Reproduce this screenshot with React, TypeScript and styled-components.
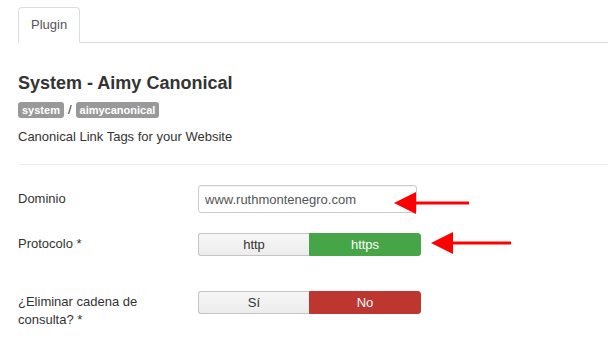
import React, { FC } from "react";
import styled, { createGlobalStyle } from "styled-components";

const GlobalStyle = createGlobalStyle`
  html, body {
    margin: 0;
    padding: 0;
    background: #fff;
  }
  body {
    font-family: "Liberation Sans", Arial, Helvetica, sans-serif;
    font-size: 13px;
    line-height: 18px;
    color: #333;
  }
`;

const Page = styled.div`
  width: 608px;
  height: 362px;
  padding: 7px 0 0 18px;
  box-sizing: border-box;
  overflow: hidden;
`;

const TabBar = styled.ul`
  display: flex;
  margin: 0;
  padding: 0;
  list-style: none;
  border-bottom: 1px solid #ddd;
`;

const Tab = styled.li`
  margin-bottom: -1px;
  padding: 8px 12px;
  line-height: 18px;
  color: #555;
  background: #fff;
  border: 1px solid #ddd;
  border-bottom-color: #fff;
  border-radius: 4px 4px 0 0;
`;

const Title = styled.h2`
  margin: 29px 0 8px;
  font-size: 18px;
  line-height: 22px;
  font-weight: bold;
  color: #333;
`;

const Crumbs = styled.div`
  display: flex;
  align-items: center;
  gap: 4px;
  height: 16px;
  color: #333;
`;

const Badge = styled.span`
  display: inline-block;
  padding: 0 4px;
  font-size: 11px;
  line-height: 16px;
  font-weight: bold;
  color: #fff;
  background: #999;
  border-radius: 3px;
`;

const Description = styled.p`
  margin: 10px 0 18px;
  line-height: 18px;
`;

const Divider = styled.hr`
  margin: 0 0 20px;
  border: 0;
  border-top: 1px solid #eee;
`;

const Row = styled.div<{ $gap: number }>`
  display: grid;
  grid-template-columns: 160px 1fr;
  column-gap: 20px;
  margin-bottom: ${(p) => p.$gap}px;
`;

const Label = styled.label<{ $offset: number }>`
  padding-top: ${(p) => p.$offset}px;
  line-height: 18px;
`;

const Control = styled.div`
  position: relative;
`;

const TextInput = styled.input`
  display: block;
  width: 219px;
  height: 28px;
  box-sizing: border-box;
  padding: 4px 6px;
  font-family: inherit;
  font-size: 13px;
  color: #555;
  border: 1px solid #ccc;
  border-radius: 3px;
  box-shadow: inset 0 1px 1px rgba(0, 0, 0, 0.05);
  outline: none;
`;

const Switch = styled.div`
  display: grid;
  grid-template-columns: 111px 112px;
  width: 223px;
  height: 23px;
`;

const SwitchBtn = styled.div<{ $active?: string }>`
  display: flex;
  align-items: center;
  justify-content: center;
  font-size: 13px;
  color: ${(p) => (p.$active ? "#fff" : "#333")};
  background: ${(p) => p.$active || "linear-gradient(#f7f7f7, #ececec)"};
  border: 1px solid ${(p) => (p.$active ? p.$active : "#c5c5c5")};
  box-sizing: border-box;
  &:first-child {
    border-radius: 3px 0 0 3px;
    border-right: 0;
  }
  &:last-child {
    border-radius: 0 3px 3px 0;
  }
`;

const Arrow = styled.svg<{ $left: number; $top: number }>`
  position: absolute;
  left: ${(p) => p.$left}px;
  top: ${(p) => p.$top}px;
`;

const RedArrow: FC<{ left: number; top: number; length: number }> = ({ left, top, length }) => (
  <Arrow $left={left} $top={top} width={length} height={22} viewBox={`0 0 ${length} 22`}>
    <polygon points="0,11 22,0 22,22" fill="#f00" />
    <rect x={21} y={9.5} width={length - 21} height={3} fill="#f00" />
  </Arrow>
);

const App: FC = () => {
  return (
    <Page>
      <GlobalStyle />
      <TabBar>
        <Tab>Plugin</Tab>
      </TabBar>

      <Title>System - Aimy Canonical</Title>
      <Crumbs>
        <Badge>system</Badge>
        <span>/</span>
        <Badge>aimycanonical</Badge>
      </Crumbs>
      <Description>Canonical Link Tags for your Website</Description>
      <Divider />

      {/* domain */}
      <Row $gap={20}>
        <Label $offset={5}>Dominio</Label>
        <Control>
          <TextInput defaultValue="www.ruthmontenegro.com" />
          <RedArrow left={196} top={7} length={75} />
        </Control>
      </Row>

      {/* protocol */}
      <Row $gap={35}>
        <Label $offset={2}>Protocolo *</Label>
        <Control>
          <Switch>
            <SwitchBtn>http</SwitchBtn>
            <SwitchBtn $active="#46a546">https</SwitchBtn>
          </Switch>
          <RedArrow left={233} top={-1} length={80} />
        </Control>
      </Row>

      {/* query string */}
      <Row $gap={0}>
        <Label $offset={2}>¿Eliminar cadena de consulta? *</Label>
        <Control>
          <Switch>
            <SwitchBtn>Sí</SwitchBtn>
            <SwitchBtn $active="#bd362f">No</SwitchBtn>
          </Switch>
        </Control>
      </Row>
    </Page>
  );
};

export default App;
